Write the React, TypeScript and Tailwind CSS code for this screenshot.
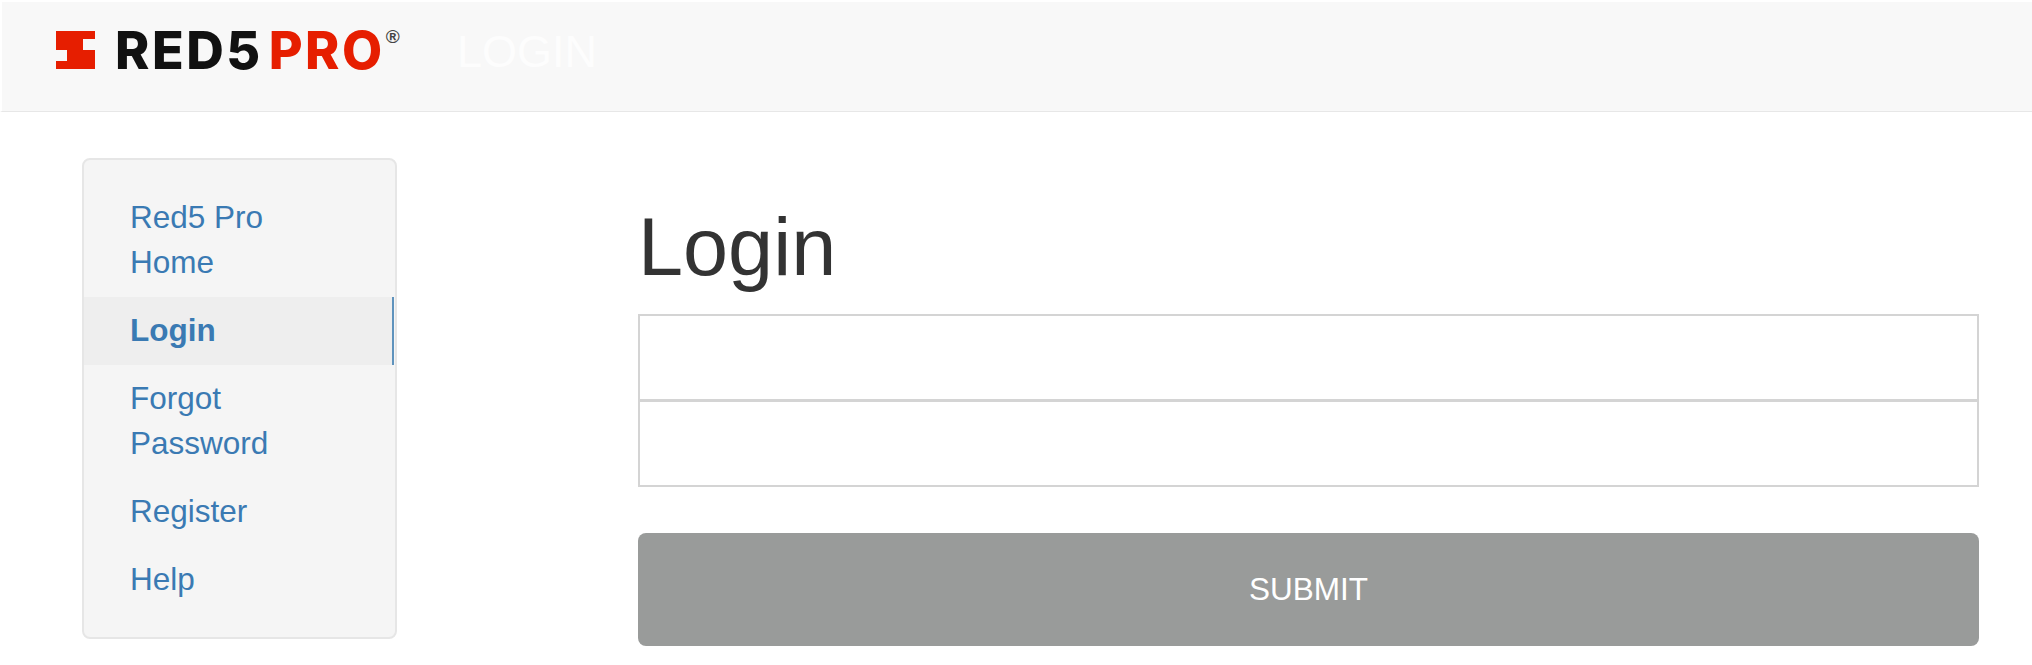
const links = [
  { label: "Red5 Pro Home" },
  { label: "Login", active: true },
  { label: "Forgot Password" },
  { label: "Register" },
  { label: "Help" },
]

function Logo() {
  return (
    <div className="flex items-start w-[343px] h-[40px]">
      <svg width="39" height="38" viewBox="0 0 39 38" className="shrink-0">
        <path fill="#e61e00" d="M0 0H39V8H27V19H39V38H0V30H11V19H0Z" />
      </svg>
      <div className="ml-[20px] mt-[1px] flex items-start font-['Inter',sans-serif] font-extrabold text-[52px] leading-[38px] tracking-[2.5px] h-[38px]">
        <span className="text-[#111111]">RED5</span>
        <span className="ml-[6px] text-[#e61e00]">PRO</span>
      </div>
      <span className="ml-[1px] -mt-[3px] text-[19px] leading-[18px] font-bold text-[#444444] font-['Liberation_Sans',sans-serif]">®</span>
    </div>
  )
}

export default function App() {
  return (
    <div className="min-h-screen bg-white font-['Liberation_Sans',Arial,sans-serif] overflow-hidden">
      <header className="h-[112px] bg-[#f8f8f8] border-b border-[#e7e7e7] border-t-2 border-t-white border-l-2 border-l-white flex pl-[54px] pt-[29px]">
        <Logo />
        <div className="ml-[58px] text-[45px] leading-[42px] text-[#fdfdfd]">LOGIN</div>
      </header>

      <div className="flex pt-[46px] pl-[82px] pr-[53px]">
        <nav className="w-[315px] h-[481px] shrink-0 bg-[#f5f5f5] border-2 border-[#e6e6e6] rounded-lg pt-[23.5px] text-[31.5px] leading-[45px] text-[#3a7ab3]">
          {links.map((link) => (
            <a
              key={link.label}
              className={`block pl-[46px] pr-[60px] py-[11.5px] ${link.active ? "font-bold bg-[#eeeeee] border-r-2 border-[#5f93bd] mr-[1px]" : ""}`}
            >
              {link.label}
            </a>
          ))}
        </nav>

        <main className="ml-[241px] flex-1 min-w-0">
          <h1 className="text-[81px] leading-[90px] text-[#333333] mt-[44px] mb-[22px]">Login</h1>
          <input className="block w-full h-[87px] border-2 border-[#d4d4d4] bg-white outline-none" />
          <input className="block w-full h-[87px] -mt-[1px] border-2 border-[#d4d4d4] bg-white outline-none" />
          <button className="block w-full h-[113px] mt-[46px] bg-[#999b9a] rounded-lg text-white text-[31.5px]">SUBMIT</button>
        </main>
      </div>
    </div>
  )
}
